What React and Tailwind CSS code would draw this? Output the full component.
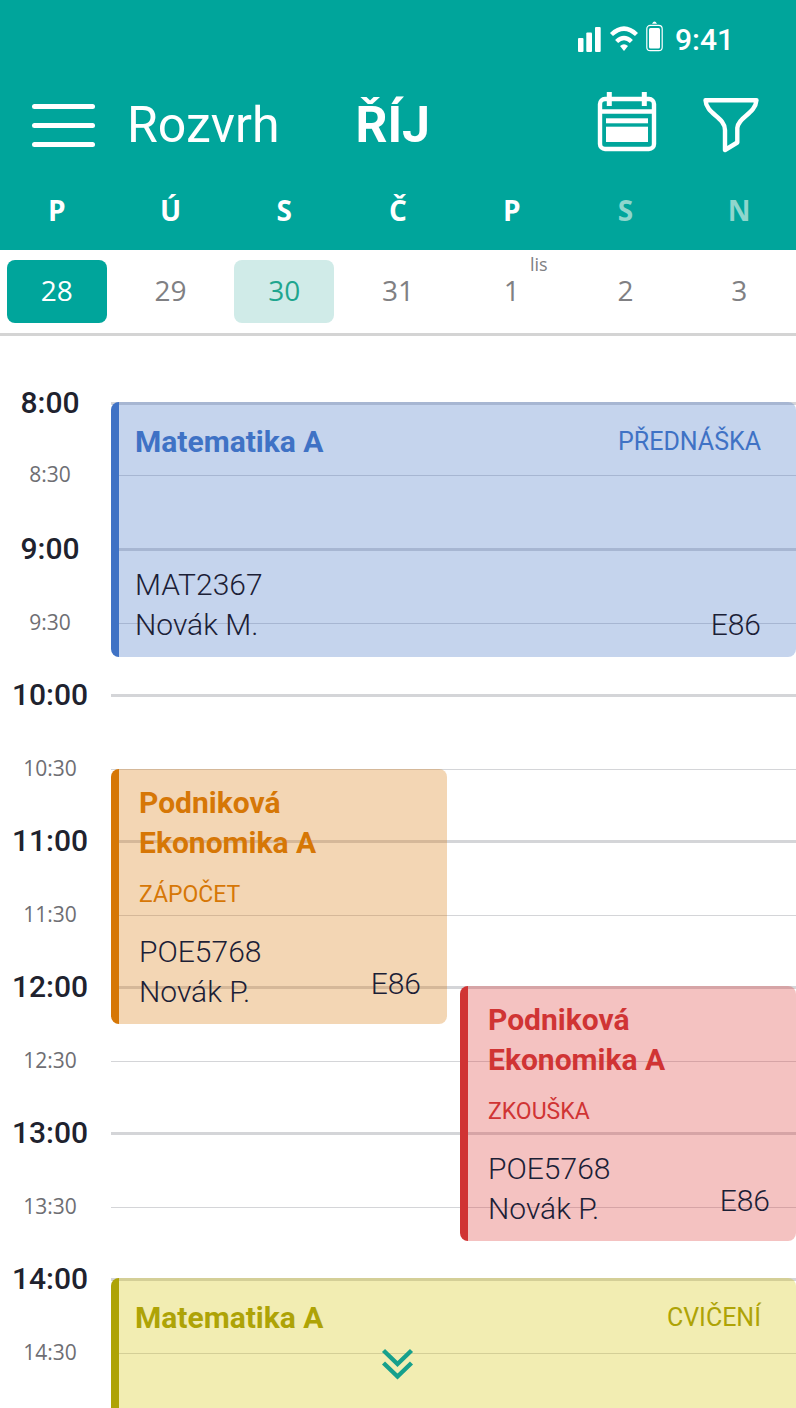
import React, { useState } from 'react';
import clsx from 'clsx';

const DAYS = [
  { letter: 'P', date: 28 },
  { letter: 'Ú', date: 29 },
  { letter: 'S', date: 30, today: true },
  { letter: 'Č', date: 31 },
  { letter: 'P', date: 1, month: 'lis' },
  { letter: 'S', date: 2, weekend: true },
  { letter: 'N', date: 3, weekend: true },
];

const SLOTS = [
  '8:00', '8:30', '9:00', '9:30', '10:00', '10:30', '11:00',
  '11:30', '12:00', '12:30', '13:00', '13:30', '14:00', '14:30',
];

const COLORS = {
  blue: { box: 'border-[#3f72c5] bg-[#3f72c5]/30', text: 'text-[#3f72c5]' },
  orange: { box: 'border-[#d67706] bg-[#d67706]/30', text: 'text-[#d67706]' },
  red: { box: 'border-[#d03434] bg-[#da3432]/30', text: 'text-[#d03434]' },
  yellow: { box: 'border-[#aea306] bg-[#d4c400]/30', text: 'text-[#aea306]' },
};

const EVENTS = [
  { start: '8:00', title: 'Matematika A', type: 'PŘEDNÁŠKA', code: 'MAT2367', teacher: 'Novák M.', room: 'E86', color: 'blue', wide: true },
  { start: '10:30', title: 'Podniková Ekonomika A', type: 'ZÁPOČET', code: 'POE5768', teacher: 'Novák P.', room: 'E86', color: 'orange', column: 2 },
  { start: '12:00', title: 'Podniková Ekonomika A', type: 'ZKOUŠKA', code: 'POE5768', teacher: 'Novák P.', room: 'E86', color: 'red', column: 3 },
  { start: '14:00', title: 'Matematika A', type: 'CVIČENÍ', color: 'yellow', wide: true },
];

const StatusBar = () => (
  <div className="flex h-20 items-center justify-end gap-3 pr-[62px]">
    <svg width="86" height="40" viewBox="0 0 86 40" fill="none" aria-hidden="true">
      {/* signal */}
      <rect x="1" y="18" width="5.5" height="14" rx="1" fill="white" />
      <rect x="9.3" y="12.5" width="5.7" height="19.5" rx="1" fill="white" />
      <rect x="18" y="7" width="5.7" height="25" rx="1" fill="white" />
      {/* wifi */}
      <path d="M34.5 14.5Q47 2.8 59.5 14.5" stroke="white" strokeWidth="4.4" />
      <path d="M39.6 21.5Q47 14.5 54.4 21.5" stroke="white" strokeWidth="4.4" />
      <path d="M43 26Q47 22.5 51 26L47 31Z" fill="white" />
      {/* battery */}
      <path d="M75 3.8Q77.5-1 80 3.8Z" fill="white" />
      <rect x="69.8" y="5.3" width="15.4" height="25.4" rx="3.5" stroke="white" strokeWidth="1.2" />
      <rect x="72" y="8" width="11" height="20.5" rx="1.5" fill="white" />
    </svg>
    <span className="text-[30px] leading-10 font-medium">9:41</span>
  </div>
);

const CalendarIcon = () => (
  <svg width="60" height="66" viewBox="0 0 60 66" fill="none" aria-hidden="true">
    <rect x="3" y="7" width="54" height="50" rx="5" stroke="white" strokeWidth="4.4" />
    <path d="M3 19.5H57" stroke="white" strokeWidth="4.6" />
    <path d="M12.3 0V14M47.3 0V14" stroke="white" strokeWidth="5" />
    <rect x="9" y="26.3" width="42" height="5" fill="white" />
    <rect x="9" y="34.7" width="42" height="15.3" fill="white" />
  </svg>
);

const FilterIcon = () => (
  <svg width="56" height="56" viewBox="0 0 56 56" fill="none" aria-hidden="true">
    <path
      d="M2.5 3.2H53.5C52.5 17 35 20 34.3 31V45.5L22 53V33C22 20 3 17 2.5 3.2Z"
      stroke="white"
      strokeWidth="4.4"
      strokeLinejoin="round"
    />
  </svg>
);

const EventCard = ({ event }) => {
  const { title, type, code, teacher, room, color, wide, column } = event;
  const palette = COLORS[color];
  const row = SLOTS.indexOf(event.start) + 1;

  return (
    <article
      className={clsx(
        'flex h-[255px] flex-col rounded-lg border-l-8 pb-3',
        palette.box,
        wide ? 'pt-5 pr-[35px] pl-4' : 'pt-3.5 pr-[26px] pl-5'
      )}
      style={{ gridRow: `${row} / span 4`, gridColumn: wide ? '2 / 4' : column }}
    >
      <div className={clsx('flex', palette.text, wide ? 'justify-between' : 'flex-col gap-3')}>
        <h2 className={clsx('text-[30px] leading-10 font-bold', !wide && 'max-w-[200px]')}>{title}</h2>
        <span className={clsx('leading-10', wide ? 'text-[25px]' : 'text-[23px]')}>{type}</span>
      </div>
      {code && (
        <div className="mt-auto flex items-end justify-between text-[30px] leading-10 font-light text-[#1b2036]">
          <p>
            {code}
            <br />
            {teacher}
          </p>
          <span className={clsx(!wide && 'pb-2')}>{room}</span>
        </div>
      )}
    </article>
  );
};

const App = () => {
  const [selected, setSelected] = useState(28);

  return (
    <div className="relative flex h-screen flex-col overflow-hidden bg-white font-['Roboto',sans-serif]">
      {/* HEADER */}
      <header className="bg-[#00a59b] text-white">
        <StatusBar />
        <div className="flex h-[90px] items-center pr-[37px] pl-8">
          <button aria-label="Menu" className="flex w-[63px] flex-col gap-3.5">
            <span className="h-[5px] w-full rounded-full bg-white" />
            <span className="h-[5px] w-full rounded-full bg-white" />
            <span className="h-[5px] w-full rounded-full bg-white" />
          </button>
          <h1 className="ml-8 text-[50px] leading-none">Rozvrh</h1>
          <span className="ml-[76px] text-[50px] leading-none font-bold">ŘÍJ</span>
          <button aria-label="Kalendář" className="ml-auto">
            <CalendarIcon />
          </button>
          <button aria-label="Filtr" className="ml-[46px]">
            <FilterIcon />
          </button>
        </div>
        <div className="grid h-20 grid-cols-7 items-center text-center font-['Open_Sans',sans-serif] text-[28px] leading-10 font-bold">
          {DAYS.map((day) => (
            <span key={day.date} className={clsx(day.weekend && 'text-[#8fd6cd]')}>{day.letter}</span>
          ))}
        </div>
      </header>

      {/* DATES */}
      <nav className="grid grid-cols-7 border-b-3 border-[#d4d4d4] py-2.5 font-['Open_Sans',sans-serif]">
        {DAYS.map((day) => (
          <button
            key={day.date}
            onClick={() => setSelected(day.date)}
            className={clsx(
              'relative mx-[7px] h-[63px] rounded-lg pb-1 text-[28px]',
              selected === day.date && 'bg-[#00a59b] text-white',
              selected !== day.date && day.today && 'bg-[#d0ebe8] text-[#1fa68f]',
              selected !== day.date && !day.today && 'text-[#808083]'
            )}
          >
            {day.date}
            {day.month && (
              <span className="absolute -top-2 right-3.5 text-[18px] leading-6">{day.month}</span>
            )}
          </button>
        ))}
      </nav>

      {/* TIMELINE */}
      <main className="min-h-0 flex-1 overflow-y-auto pt-[66px] [scrollbar-width:none]">
        <div className="grid grid-cols-[98px_1fr_1fr] grid-rows-[73px_73px_repeat(7,75px_71px)] items-start gap-x-[13px]">
          {SLOTS.map((slot, i) => {
            const full = i % 2 === 0;
            return (
              <React.Fragment key={slot}>
                <time
                  className={clsx(
                    'col-start-1 flex h-0 items-center justify-center pl-0.5',
                    full
                      ? 'text-[30px] font-medium text-[#20222e]'
                      : "font-['Open_Sans',sans-serif] text-[21px] text-[#6e6e73]"
                  )}
                  style={{ gridRow: i + 1 }}
                >
                  {slot}
                </time>
                <div
                  className={clsx('col-start-2 col-end-4', full ? 'h-[3px] bg-[#d4d5d8]' : 'h-px bg-[#d4d5d8]')}
                  style={{ gridRow: i + 1 }}
                />
              </React.Fragment>
            );
          })}
          {EVENTS.map((event) => (
            <EventCard key={event.start} event={event} />
          ))}
        </div>
      </main>

      {/* SCROLL DOWN */}
      <button aria-label="Další" className="absolute bottom-7 left-1/2 -translate-x-1/2">
        <svg width="34" height="34" viewBox="0 0 34 34" fill="none" aria-hidden="true">
          <path
            d="M2.5 4.5L16.5 18L30.5 4.5M2.5 17L16.5 30.5L30.5 17"
            stroke="#16a08c"
            strokeWidth="4.4"
          />
        </svg>
      </button>
    </div>
  );
};

export default App;
